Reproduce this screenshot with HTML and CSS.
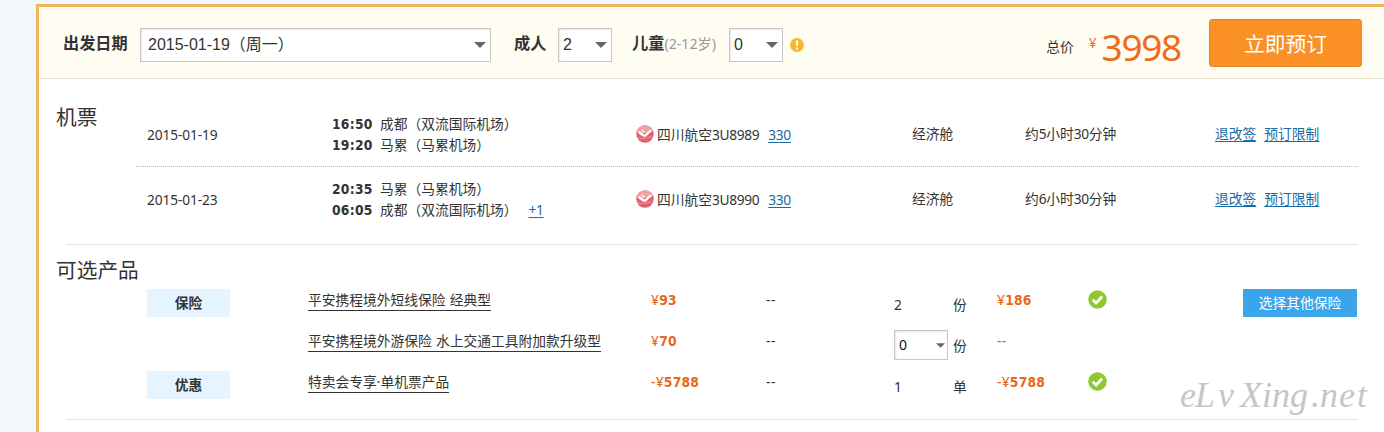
FILE: index.html
```html
<!DOCTYPE html>
<html lang="zh-CN">
<head>
    <meta charset="UTF-8">
    <meta name="viewport" content="width=device-width, initial-scale=1.0">
    <title>机票预订</title>
    <link rel="stylesheet" href="styles.css">
</head>
<body>

    <!-- Icons -->
    <svg class="sprite">
        <symbol id="arrow" viewBox="0 0 12 6"><path d="M0 0h12L6 6z" fill="#666"/></symbol>
        <symbol id="ok" viewBox="0 0 19 19">
            <circle cx="9.5" cy="9.5" r="9.3" fill="#8fc831"/>
            <path d="M4.8 9.8l3.3 3.3 6-6.6" fill="none" stroke="#fff" stroke-width="2.7"/>
        </symbol>
        <symbol id="airline" viewBox="0 0 18 18">
            <circle cx="9" cy="9" r="8.7" fill="#e0616b"/>
            <path d="M1 5.5Q4 .6 9 .6t8 4.9L11.5 9 9 7.2 6.5 9z" fill="#eda3a6"/>
            <path d="M1 6.2l3 .2 4.8 3 4.7-4.4 3 .6-7.1 6.4Q4.5 11.4 1 6.2z" fill="#fff"/>
            <path d="M5.5 4.6l3.3 3" stroke="#fff" stroke-width="1.2"/>
            <path d="M1.5 12.5q3.5 1.2 7.5.8t7-2.3" fill="none" stroke="#f3b5b8" stroke-width=".7"/>
        </symbol>
    </svg>

    <div class="card">
        <!-- Booking bar -->
        <div class="bar">
            <label class="bar-label">出发日期</label>
            <span class="select select-date">2015-01-19（周一）<svg class="arrow"><use href="#arrow"/></svg></span>
            <label class="bar-label adult">成人</label>
            <span class="select">2<svg class="arrow"><use href="#arrow"/></svg></span>
            <label class="bar-label child">儿童<span class="age">(2-12岁)</span></label>
            <span class="select">0<svg class="arrow"><use href="#arrow"/></svg></span>
            <svg class="tip" viewBox="0 0 14 14">
                <circle cx="7" cy="7" r="6.9" fill="#fab52c"/>
                <path d="M7 2.6v5.2M7 9.5v2" stroke="#fff" stroke-width="2"/>
            </svg>
            <div class="total">
                <span class="total-label">总价</span>
                <span class="yen">¥</span>
                <span class="amount">3998</span>
            </div>
            <button class="book">立即预订</button>
        </div>

        <!-- Flights -->
        <div class="section flights">
            <h2>机票</h2>
            <div class="flight-list">
                <div class="flight">
                    <span class="date">2015-01-19</span>
                    <div class="route">
                        <div><b>16:50</b>成都（双流国际机场）</div>
                        <div><b>19:20</b>马累（马累机场）</div>
                    </div>
                    <span class="airline"><svg><use href="#airline"/></svg>四川航空<span class="num">3U8989</span><a class="num" href="#">330</a></span>
                    <span class="seat">经济舱</span>
                    <span class="seat">约<span class="num">5</span>小时<span class="num">30</span>分钟</span>
                    <span class="rules"><a href="#">退改签</a><a href="#">预订限制</a></span>
                </div>
                <div class="flight">
                    <span class="date">2015-01-23</span>
                    <div class="route">
                        <div><b>20:35</b>马累（马累机场）</div>
                        <div><b>06:05</b>成都（双流国际机场）<a class="num" href="#">+1</a></div>
                    </div>
                    <span class="airline"><svg><use href="#airline"/></svg>四川航空<span class="num">3U8990</span><a class="num" href="#">330</a></span>
                    <span class="seat">经济舱</span>
                    <span class="seat">约<span class="num">6</span>小时<span class="num">30</span>分钟</span>
                    <span class="rules"><a href="#">退改签</a><a href="#">预订限制</a></span>
                </div>
            </div>
        </div>

        <!-- Optional products -->
        <div class="section products">
            <h2>可选产品</h2>
            <div class="product">
                <span class="tag">保险</span>
                <span><a class="name" href="#">平安携程境外短线保险 经典型</a></span>
                <span class="price"><i>¥</i>93</span>
                <span class="dash">--</span>
                <span class="qty num">2</span>
                <span class="qty">份</span>
                <span class="price"><i>¥</i>186</span>
                <svg class="ok"><use href="#ok"/></svg>
                <button class="more">选择其他保险</button>
            </div>
            <div class="product">
                <span></span>
                <span><a class="name" href="#">平安携程境外游保险 水上交通工具附加款升级型</a></span>
                <span class="price"><i>¥</i>70</span>
                <span class="dash">--</span>
                <span class="select select-small">0<svg class="arrow"><use href="#arrow"/></svg></span>
                <span class="qty">份</span>
                <span class="price"><i>--</i></span>
            </div>
            <div class="product">
                <span class="tag">优惠</span>
                <span><a class="name" href="#">特卖会专享·单机票产品</a></span>
                <span class="price"><i>-¥</i>5788</span>
                <span class="dash">--</span>
                <span class="qty num">1</span>
                <span class="qty">单</span>
                <span class="price"><i>-¥</i>5788</span>
                <svg class="ok"><use href="#ok"/></svg>
            </div>
        </div>
    </div>

    <svg class="watermark"><text x="2 17 40 62 84 94 112 133 142 161 179" y="31">eLvXing.net</text></svg>

</body>
</html>
```
FILE: styles.css
```css
* {
    box-sizing: border-box;
}

body {
    margin: 0;
    padding: 4px 0 0 36px;
    height: 432px;
    overflow: hidden;
    background-color: #f2f7fb;
    color: #333;
    font-family: "Noto Sans", "Noto Sans CJK SC", sans-serif;
    font-size: 13.75px;
    line-height: 20px;
}

a {
    color: #1a6aa5;
    text-decoration: underline;
    text-underline-offset: 2px;
}

button {
    font-family: inherit;
    color: white;
    padding: 0;
    cursor: pointer;
}

.sprite {
    display: none;
}

.num {
    letter-spacing: -0.35px;
}

.card {
    height: 430px;
    border-top: 3px solid #f0b45c;
    border-left: 3px solid #f0b45c;
    background-color: white;
}

/* Booking bar */
.bar {
    display: flex;
    align-items: flex-start;
    height: 72px;
    padding: 12px 22px 0 24px;
    background-color: #fffcf2;
    border-bottom: 1px solid #e5dfcd;
}

.bar-label {
    width: 77px;
    height: 42px;
    padding-top: 8px;
    line-height: 32px;
    font-size: 16.2px;
    font-weight: bold;
    white-space: nowrap;
}

.adult {
    width: 44px;
    margin-left: 23px;
}

.child {
    width: 97px;
    margin-left: 20px;
}

.age {
    font-size: 14.2px;
    font-weight: normal;
    color: #999;
}

.select {
    display: flex;
    justify-content: space-between;
    align-items: center;
    width: 54px;
    height: 34px;
    margin-top: 9px;
    padding: 0 4px;
    border: 1px solid #c9c6c6;
    background-color: white;
    box-shadow: inset 1px 1px 2px #e8e6e6;
    font-family: "Liberation Sans", "Noto Sans CJK SC", sans-serif;
    font-size: 16px;
}

.select-date {
    width: 351px;
    padding-left: 7px;
}

.arrow {
    width: 12px;
    height: 6px;
}

.tip {
    width: 14px;
    height: 14px;
    margin: 19px 0 0 7px;
}

.total {
    display: flex;
    margin-left: auto;
    margin-right: 28px;
    color: #ef6c1a;
}

.total-label {
    padding-top: 18px;
    margin-right: 15px;
    color: #333;
}

.yen {
    padding-top: 14px;
    margin-right: 5px;
}

.amount {
    padding-top: 7px;
    font-size: 37px;
    line-height: 42px;
    letter-spacing: -1.3px;
}

.book {
    width: 153px;
    height: 48px;
    border: 1px solid #d88a35;
    border-radius: 3px;
    background-color: #fb9126;
    font-size: 20.8px;
}

/* Sections */
h2 {
    margin: 0;
    font-size: 20.7px;
    font-weight: normal;
    white-space: nowrap;
}

.section::after {
    content: "";
    display: block;
    height: 1px;
    margin: 0 26px 0 27px;
    background-color: #e4e4e4;
}

.flights {
    display: grid;
    grid-template-columns: 80px 1fr;
    padding-left: 17px;
}

.flights::after {
    grid-column: 1 / 3;
    margin-left: 10px;
}

.flights h2 {
    padding-top: 28px;
}

.flight {
    display: grid;
    grid-template-columns: 185px 304px 276px 113px 190px auto;
    height: 88px;
    margin-right: 26px;
    padding: 35px 0 0 11px;
    border-bottom: 1px dotted #bbb;
    white-space: nowrap;
}

.flight + .flight {
    height: 77px;
    padding-top: 12px;
    border-bottom: none;
}

.date,
.airline {
    padding-top: 11px;
}

.date {
    letter-spacing: -0.12px;
}

.seat,
.rules {
    padding-top: 10px;
}

.route {
    line-height: 20.5px;
}

.route a {
    margin-left: 11px;
}

b,
.price {
    font-family: "DejaVu Sans Condensed", "DejaVu Sans", sans-serif;
    font-stretch: condensed;
    font-weight: bold;
    letter-spacing: 0.25px;
}

b {
    display: inline-block;
    width: 48px;
}

.airline {
    display: flex;
}

.airline svg {
    width: 18px;
    height: 18px;
    margin-right: 3px;
}

.airline a {
    margin-left: 9px;
}

.rules a {
    margin-right: 8px;
}

/* Optional products */
.products h2 {
    height: 44px;
    padding-left: 17px;
    line-height: 51px;
}

.product {
    display: grid;
    grid-template-columns: 161px 343px 115px 128px 59px 44px 91px 155px 114px;
    align-items: start;
    height: 41px;
    padding-left: 108px;
}

.product:last-child {
    height: 48px;
}

.tag {
    width: 83px;
    height: 28px;
    background-color: #e5f4fe;
    line-height: 27px;
    font-weight: bold;
    text-align: center;
}

.name {
    display: inline-block;
    margin-top: 1px;
    height: 21px;
    border-bottom: 1px solid #333;
    color: #333;
    text-decoration: none;
    word-spacing: 0.7px;
}

.price {
    padding-top: 1px;
    color: #e8681f;
}

.price i {
    font-family: "Noto Sans", sans-serif;
    font-style: normal;
    font-weight: 500;
}

.dash {
    padding-top: 1px;
    letter-spacing: 0.5px;
}

.qty {
    padding-top: 6px;
}

.select-small {
    height: 30px;
    margin-top: 0;
    padding: 0 2px 0 4px;
    font-family: "Noto Sans", sans-serif;
    font-size: 14px;
    color: #111;
}

.select-small .arrow {
    width: 9px;
    height: 5px;
}

.ok {
    width: 19px;
    height: 19px;
    margin-top: 1px;
}

.more {
    height: 28px;
    padding-bottom: 2px;
    border: none;
    background-color: #3aa5ea;
    font-size: 13.75px;
}

/* Site mark over the bottom right corner */
.watermark {
    position: absolute;
    left: 1178px;
    top: 376px;
    width: 200px;
    height: 50px;
    fill: #c6c6c6;
    font-family: "Liberation Serif", serif;
    font-size: 36px;
    font-style: italic;
}
```
